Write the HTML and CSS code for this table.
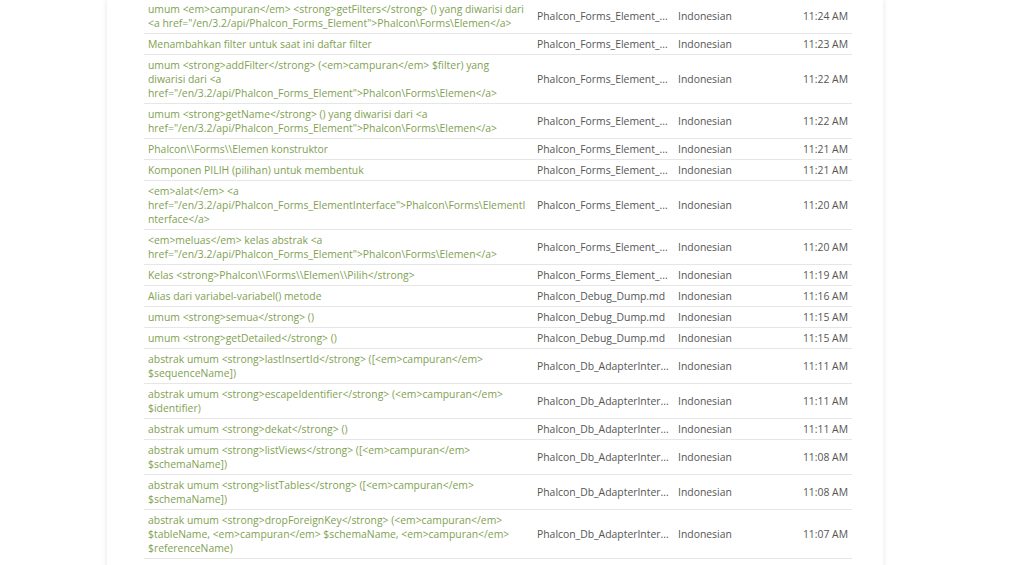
FILE: index.html
```html
<!DOCTYPE html>
<html>
<head>
<meta charset="utf-8">
<link rel="stylesheet" href="styles.css">
</head>
<body>
<div class="page">
  <div class="card">
    <table class="log">
      <colgroup><col class="c-text"><col class="c-file"><col class="c-lang"><col class="c-time"></colgroup>
      <tbody>
        <tr><td class="text">umum &lt;em&gt;campuran&lt;/em&gt; &lt;strong&gt;getFilters&lt;/strong&gt; () yang diwarisi dari &lt;a href="/en/3.2/api/Phalcon_Forms_Element"&gt;Phalcon\Forms\Elemen&lt;/a&gt;</td><td>Phalcon_Forms_Element_...</td><td>Indonesian</td><td class="time">11:24 AM</td></tr>
        <tr><td class="text">Menambahkan filter untuk saat ini daftar filter</td><td>Phalcon_Forms_Element_...</td><td>Indonesian</td><td class="time">11:23 AM</td></tr>
        <tr><td class="text">umum &lt;strong&gt;addFilter&lt;/strong&gt; (&lt;em&gt;campuran&lt;/em&gt; $filter) yang diwarisi dari &lt;a href="/en/3.2/api/Phalcon_Forms_Element"&gt;Phalcon\Forms\Elemen&lt;/a&gt;</td><td>Phalcon_Forms_Element_...</td><td>Indonesian</td><td class="time">11:22 AM</td></tr>
        <tr><td class="text">umum &lt;strong&gt;getName&lt;/strong&gt; () yang diwarisi dari &lt;a href="/en/3.2/api/Phalcon_Forms_Element"&gt;Phalcon\Forms\Elemen&lt;/a&gt;</td><td>Phalcon_Forms_Element_...</td><td>Indonesian</td><td class="time">11:22 AM</td></tr>
        <tr><td class="text">Phalcon\\Forms\\Elemen konstruktor</td><td>Phalcon_Forms_Element_...</td><td>Indonesian</td><td class="time">11:21 AM</td></tr>
        <tr><td class="text">Komponen PILIH (pilihan) untuk membentuk</td><td>Phalcon_Forms_Element_...</td><td>Indonesian</td><td class="time">11:21 AM</td></tr>
        <tr><td class="text">&lt;em&gt;alat&lt;/em&gt; &lt;a href="/en/3.2/api/Phalcon_Forms_ElementInterface"&gt;Phalcon\Forms\ElementInterface&lt;/a&gt;</td><td>Phalcon_Forms_Element_...</td><td>Indonesian</td><td class="time">11:20 AM</td></tr>
        <tr><td class="text">&lt;em&gt;meluas&lt;/em&gt; kelas abstrak &lt;a href="/en/3.2/api/Phalcon_Forms_Element"&gt;Phalcon\Forms\Elemen&lt;/a&gt;</td><td>Phalcon_Forms_Element_...</td><td>Indonesian</td><td class="time">11:20 AM</td></tr>
        <tr><td class="text">Kelas &lt;strong&gt;Phalcon\\Forms\\Elemen\\Pilih&lt;/strong&gt;</td><td>Phalcon_Forms_Element_...</td><td>Indonesian</td><td class="time">11:19 AM</td></tr>
        <tr><td class="text">Alias dari variabel-variabel() metode</td><td>Phalcon_Debug_Dump.md</td><td>Indonesian</td><td class="time">11:16 AM</td></tr>
        <tr><td class="text">umum &lt;strong&gt;semua&lt;/strong&gt; ()</td><td>Phalcon_Debug_Dump.md</td><td>Indonesian</td><td class="time">11:15 AM</td></tr>
        <tr><td class="text">umum &lt;strong&gt;getDetailed&lt;/strong&gt; ()</td><td>Phalcon_Debug_Dump.md</td><td>Indonesian</td><td class="time">11:15 AM</td></tr>
        <tr><td class="text">abstrak umum &lt;strong&gt;lastInsertId&lt;/strong&gt; ([&lt;em&gt;campuran&lt;/em&gt; $sequenceName])</td><td>Phalcon_Db_AdapterInter...</td><td>Indonesian</td><td class="time">11:11 AM</td></tr>
        <tr><td class="text">abstrak umum &lt;strong&gt;escapeIdentifier&lt;/strong&gt; (&lt;em&gt;campuran&lt;/em&gt; $identifier)</td><td>Phalcon_Db_AdapterInter...</td><td>Indonesian</td><td class="time">11:11 AM</td></tr>
        <tr><td class="text">abstrak umum &lt;strong&gt;dekat&lt;/strong&gt; ()</td><td>Phalcon_Db_AdapterInter...</td><td>Indonesian</td><td class="time">11:11 AM</td></tr>
        <tr><td class="text">abstrak umum &lt;strong&gt;listViews&lt;/strong&gt; ([&lt;em&gt;campuran&lt;/em&gt; $schemaName])</td><td>Phalcon_Db_AdapterInter...</td><td>Indonesian</td><td class="time">11:08 AM</td></tr>
        <tr><td class="text">abstrak umum &lt;strong&gt;listTables&lt;/strong&gt; ([&lt;em&gt;campuran&lt;/em&gt; $schemaName])</td><td>Phalcon_Db_AdapterInter...</td><td>Indonesian</td><td class="time">11:08 AM</td></tr>
        <tr><td class="text">abstrak umum &lt;strong&gt;dropForeignKey&lt;/strong&gt; (&lt;em&gt;campuran&lt;/em&gt; $tableName, &lt;em&gt;campuran&lt;/em&gt; $schemaName, &lt;em&gt;campuran&lt;/em&gt; $referenceName)</td><td>Phalcon_Db_AdapterInter...</td><td>Indonesian</td><td class="time">11:07 AM</td></tr>
      </tbody>
    </table>
  </div>
</div>
</body>
</html>
```
FILE: styles.css
```css
html, body {
  margin: 0;
  padding: 0;
  background: #ffffff;
  overflow: hidden;
}
body {
  font-family: "Open Sans", "Liberation Sans", sans-serif;
  font-size: 10.4px;
  color: #555555;
}
.page {
  padding-left: 107px;
  height: 565px;
  overflow: hidden;
}
.card {
  width: 776px;
  min-height: 600px;
  background: #ffffff;
  box-shadow: 0 0 6px rgba(0, 0, 0, 0.10);
  padding: 0 31px 0 37px;
  box-sizing: border-box;
  margin-top: -1px;
}
.log {
  width: 708px;
  border-collapse: collapse;
  table-layout: fixed;
}
.c-text { width: 389px; }
.c-file { width: 141px; }
.c-lang { width: 100px; }
.c-time { width: 78px; }
.log td {
  padding: 3px 4px;
  line-height: 14px;
  border-bottom: 1px solid #e6e6e6;
  vertical-align: middle;
  white-space: nowrap;
  overflow: hidden;
}
.log td.text {
  color: #7f9f52;
  white-space: normal;
  overflow-wrap: break-word;
}
.log td.time {
  text-align: right;
}
```
